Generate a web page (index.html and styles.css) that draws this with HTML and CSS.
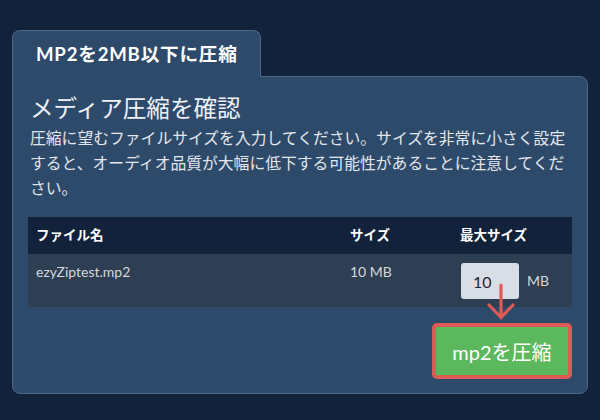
FILE: index.html
```html
<!DOCTYPE html>
<html lang="ja">
<head>
<meta charset="utf-8">
<link rel="stylesheet" href="styles.css">
</head>
<body>
<div class="wrap">
  <div class="tab">MP2を2MB以下に圧縮</div>
  <div class="panel">
    <h2 class="title">メディア圧縮を確認</h2>
    <p class="desc">圧縮に望むファイルサイズを入力してください。サイズを非常に小さく設定すると、オーディオ品質が大幅に低下する可能性があることに注意してください。</p>
    <table class="files">
      <colgroup><col class="c1"><col class="c2"><col class="c3"></colgroup>
      <thead>
        <tr><th>ファイル名</th><th>サイズ</th><th>最大サイズ</th></tr>
      </thead>
      <tbody>
        <tr>
          <td>ezyZiptest.mp2</td>
          <td>10 MB</td>
          <td class="maxcell">
            <div class="maxwrap">
              <span class="inwrap">
                <input class="num" type="text" value="10">
                <svg class="arrow" width="30" height="40" viewBox="0 0 30 40"><path d="M14 2 V35 M2 22 L14 34.5 L26 22" fill="none" stroke="#dc5b55" stroke-width="3.2" stroke-linecap="round" stroke-linejoin="round"/></svg>
              </span>
              <span class="unit">MB</span>
            </div>
          </td>
        </tr>
      </tbody>
    </table>
    <div class="actions">
      <button class="go">mp2を圧縮</button>
    </div>
  </div>
</div>
</body>
</html>
```

FILE: styles.css
```css
html, body {
  margin: 0;
  padding: 0;
  background: #11223a;
}
body {
  font-family: Lato, "Noto Sans CJK JP", sans-serif;
  color: #e3e7ec;
  width: 600px;
  height: 420px;
  overflow: hidden;
}
.wrap {
  padding: 30px 12px 0 12px;
}
.tab {
  position: relative;
  z-index: 1;
  box-sizing: border-box;
  width: 249px;
  height: 47px;
  margin-bottom: -1px;
  padding: 11px 0 0 23px;
  background: #2d4a6a;
  border: 1px solid #4d6689;
  border-bottom: none;
  border-radius: 8px 8px 0 0;
  color: #ffffff;
  font-weight: 700;
  font-size: 18.6px;
  letter-spacing: 0.8px;
  line-height: 24px;
}
.panel {
  box-sizing: border-box;
  width: 576px;
  height: 318px;
  background: #2d4a6a;
  border: 1px solid #4d6689;
  border-radius: 0 8px 8px 8px;
  padding: 15px 15px 14px 15px;
}
.title {
  margin: 0;
  padding: 0 2px;
  font-family: "Noto Sans CJK JP", sans-serif;
  font-weight: 400;
  font-size: 23.6px;
  line-height: 30px;
  color: #eef1f5;
}
.desc {
  margin: 3px 0 0 0;
  padding: 0 2px;
  font-family: "Noto Sans CJK JP", sans-serif;
  font-size: 15.8px;
  line-height: 25px;
  color: #e3e7ec;
}
.files {
  margin-top: 17px;
  width: 544px;
  border-collapse: collapse;
  table-layout: fixed;
}
.c1 { width: 314px; }
.c2 { width: 110px; }
.c3 { width: 120px; }
.files th {
  background: #11223a;
  text-align: left;
  font-weight: 700;
  font-size: 13.5px;
  line-height: 21px;
  padding: 8px 8px;
  color: #ffffff;
}
.files td {
  background: #2e3e53;
  vertical-align: top;
  font-size: 14px;
  line-height: 20px;
  padding: 8px 8px 25px 8px;
  color: #d4d8de;
}
.files td.maxcell {
  padding: 9px 8px 8px 9px;
}
.maxwrap {
  display: flex;
  align-items: center;
  gap: 8px;
}
.inwrap {
  position: relative;
  display: block;
  width: 58px;
  height: 36px;
}
.num {
  box-sizing: border-box;
  width: 58px;
  height: 36px;
  border: none;
  border-radius: 3px;
  background: #d8dde6;
  padding: 0 0 0 12px;
  font-family: Lato, sans-serif;
  font-size: 16px;
  color: #1e2633;
  outline: none;
}
.arrow {
  position: absolute;
  left: 26px;
  top: 20px;
}
.unit {
  font-size: 14px;
  color: #d4d8de;
}
.actions {
  display: flex;
  justify-content: flex-end;
  margin-top: 16px;
}
.go {
  box-sizing: border-box;
  width: 140px;
  height: 56px;
  border: 4px solid #dc5b55;
  border-radius: 5px;
  background: #5cb85c;
  color: #ffffff;
  font-family: Lato, "Noto Sans CJK JP", sans-serif;
  font-size: 20px;
  padding: 0;
}
```
